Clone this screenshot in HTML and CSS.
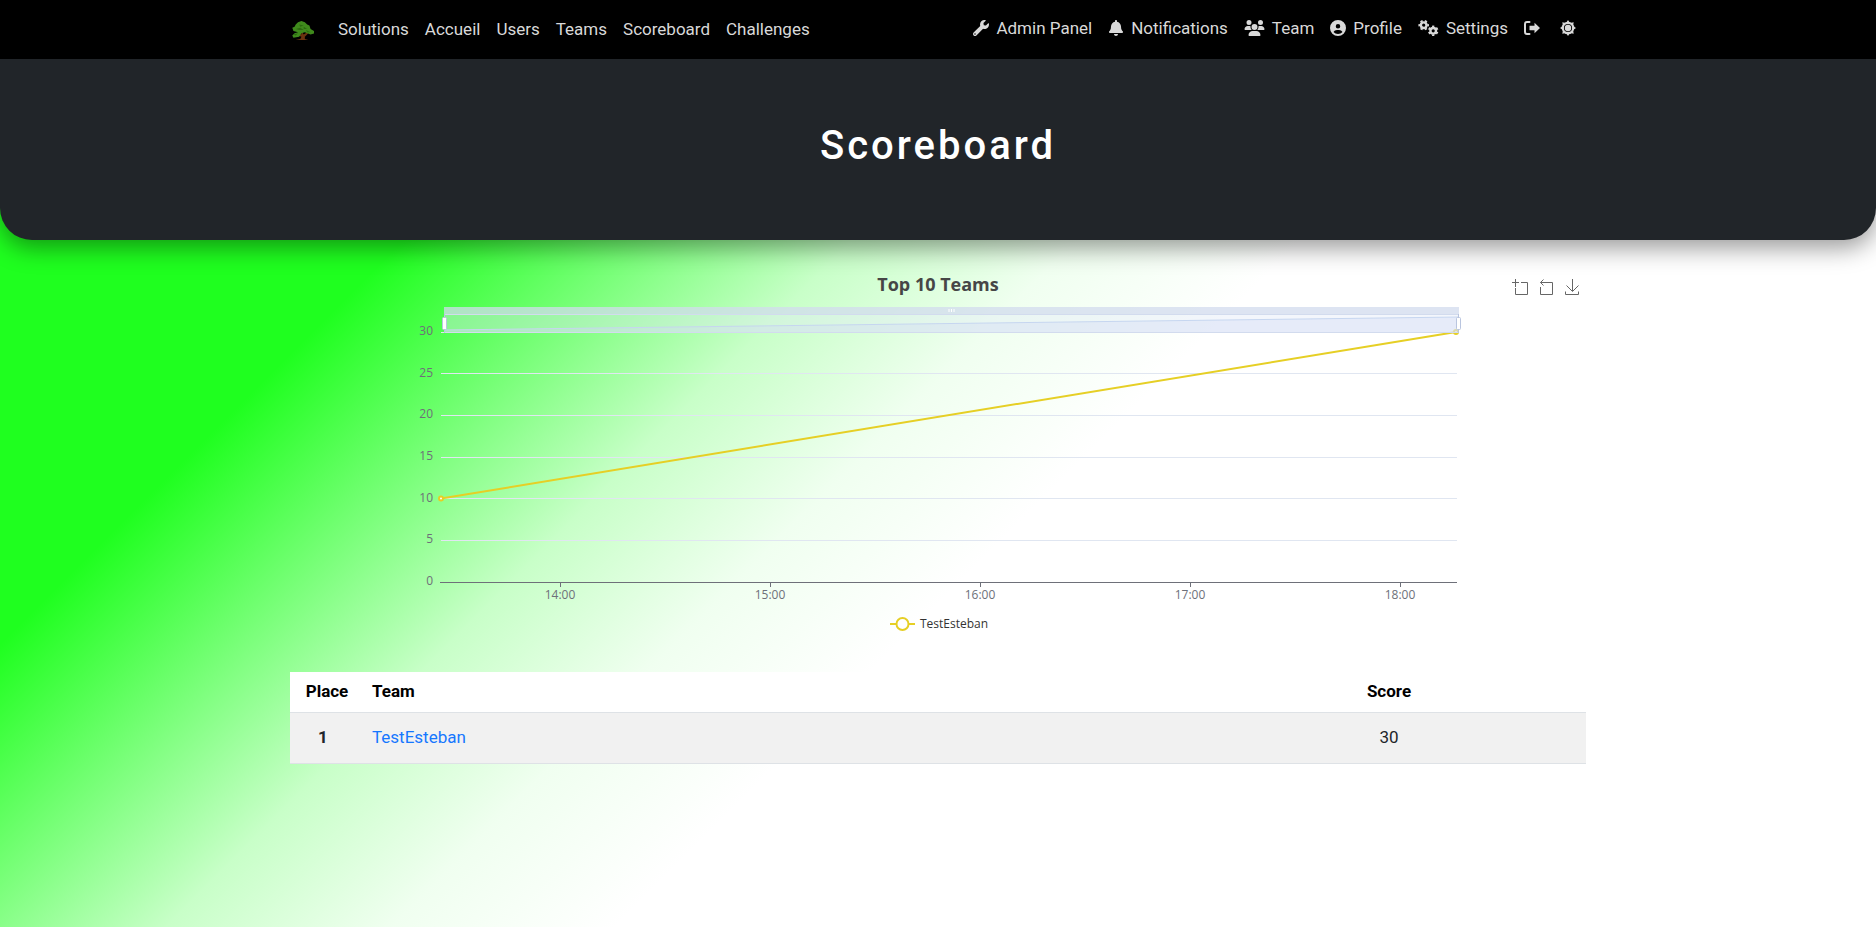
FILE: index.html
```html
<!DOCTYPE html>
<html lang="en">
<head>
<meta charset="utf-8">
<meta name="viewport" content="width=device-width, initial-scale=1">
<title>Scoreboard</title>
<link rel="stylesheet" href="styles.css">
</head>
<body>
<nav class="navbar">
  <div class="container navbar-inner">
    <a class="brand" href="#" aria-label="Home">
      <svg width="24" height="20" viewBox="1 0 21 18" preserveAspectRatio="none" aria-hidden="true">
        <path fill="#6b3410" d="M11 10l2 3 3-2 1 1-3 3 0 2 3 1H6l4-1 1-2-5-2 1-1 4 1z"/>
        <path fill="#3f8a1c" d="M8 2l3-1 3 1 2 2 2 1 1 3 3 2 1 2-4 1-5-2-3 1-2 3-5 1-1-2 2-2 3-1-4-1-1-3 2-1 1-2z"/>
        <path fill="#2c6a10" d="M9 4l4 1-3 1zM6 8l4-1 3 2-4 0zM13 6l3 2-3 0zM15 9l4 2-3 0zM4 13l4-1-2 2z"/>
      </svg>
    </a>
    <ul class="nav-list nav-main">
      <li><a class="nav-link" href="#">Solutions</a></li>
      <li><a class="nav-link" href="#">Accueil</a></li>
      <li><a class="nav-link" href="#">Users</a></li>
      <li><a class="nav-link" href="#">Teams</a></li>
      <li><a class="nav-link" href="#">Scoreboard</a></li>
      <li><a class="nav-link" href="#">Challenges</a></li>
    </ul>
    <ul class="nav-list nav-user">
      <li><a class="nav-link" href="#"><svg class="icon" viewBox="0 0 512 512" aria-hidden="true"><path d="M507.73 109.1c-2.24-9.03-13.54-12.09-20.12-5.51l-74.36 74.36-67.88-11.31-11.31-67.88 74.36-74.36c6.62-6.62 3.43-17.9-5.66-20.16-47.38-11.74-99.55.91-136.58 37.93-39.64 39.64-50.55 97.1-34.05 147.2L18.74 402.76c-24.99 24.99-24.99 65.51 0 90.5 24.99 24.99 65.51 24.99 90.5 0l213.21-213.21c50.12 16.71 107.47 5.68 147.37-34.22 37.07-37.07 49.7-89.32 37.91-136.73zM64 472c-13.25 0-24-10.75-24-24 0-13.26 10.75-24 24-24s24 10.74 24 24c0 13.25-10.75 24-24 24z"/></svg>Admin Panel</a></li>
      <li><a class="nav-link" href="#"><svg class="icon" viewBox="0 0 448 512" aria-hidden="true"><path d="M224 512c35.32 0 63.97-28.65 63.97-64H160.03c0 35.35 28.65 64 63.97 64zm215.39-149.71c-19.32-20.76-55.47-51.99-55.47-154.29 0-77.7-54.48-139.9-127.94-155.16V32c0-17.67-14.32-32-31.98-32s-31.98 14.33-31.98 32v20.84C118.56 68.1 64.08 130.3 64.08 208c0 102.3-36.15 133.53-55.47 154.29-6 6.45-8.66 14.16-8.61 21.71.11 16.4 12.98 32 32.1 32h383.8c19.12 0 32-15.6 32.1-32 .05-7.55-2.61-15.27-8.61-21.71z"/></svg>Notifications</a></li>
      <li><a class="nav-link" href="#"><svg class="icon icon-wide" viewBox="0 0 640 512" aria-hidden="true"><path d="M144 0a80 80 0 1 1 0 160A80 80 0 1 1 144 0zM512 0a80 80 0 1 1 0 160A80 80 0 1 1 512 0zM0 298.7C0 239.8 47.8 192 106.7 192h42.7c15.9 0 31 3.5 44.6 9.7c-1.3 7.2-1.9 14.7-1.9 22.3c0 38.2 16.8 72.5 43.3 96H21.3C9.6 320 0 310.4 0 298.7zM405.3 320h-.7c26.6-23.5 43.3-57.8 43.3-96c0-7.6-.7-15-1.9-22.3c13.6-6.3 28.7-9.7 44.6-9.7h42.7C592.2 192 640 239.8 640 298.7c0 11.8-9.6 21.3-21.3 21.3H405.3zM224 224a96 96 0 1 1 192 0 96 96 0 1 1 -192 0zM128 485.3C128 411.7 187.7 352 261.3 352H378.7C452.3 352 512 411.7 512 485.3c0 14.7-11.9 26.7-26.7 26.7H154.7c-14.7 0-26.7-11.9-26.7-26.7z"/></svg>Team</a></li>
      <li><a class="nav-link" href="#"><svg class="icon" viewBox="0 0 512 512" aria-hidden="true"><path fill-rule="evenodd" d="M399 384.2C376.9 345.8 335.4 320 288 320H224c-47.4 0-88.9 25.8-111 64.2c35.2 39.2 86.2 63.8 143 63.8s107.8-24.7 143-63.8zM0 256a256 256 0 1 1 512 0A256 256 0 1 1 0 256zm256 16a72 72 0 1 0 0-144 72 72 0 1 0 0 144z"/></svg>Profile</a></li>
      <li><a class="nav-link" href="#"><svg class="icon icon-wide" viewBox="0 0 20 16" aria-hidden="true">
        <g fill="none" stroke="currentColor"><circle cx="5.2" cy="5.2" r="2.8" stroke-width="2.4"/><circle cx="5.2" cy="5.2" r="4.4" stroke-width="1.8" pathLength="12" stroke-dasharray="1 1" stroke-dashoffset=".5"/><circle cx="14.7" cy="10.8" r="2.8" stroke-width="2.4"/><circle cx="14.7" cy="10.8" r="4.4" stroke-width="1.8" pathLength="12" stroke-dasharray="1 1" stroke-dashoffset="1.5"/></g></svg>Settings</a></li>
      <li><a class="nav-link" href="#" aria-label="Log out"><svg class="icon" viewBox="0 0 16 16" aria-hidden="true"><path fill="none" stroke="currentColor" stroke-width="2" stroke-linecap="round" d="M5.500 2H3a2 2 0 0 0-2 2v8a2 2 0 0 0 2 2h2.500"/><path d="M10.500 2.700L16 8l-5.500 5.300V10.200H5.500V5.800h5z"/></svg></a></li>
      <li><button class="nav-link theme-toggle" type="button" aria-label="Toggle theme"><svg class="icon" viewBox="0 0 16 16" aria-hidden="true"><circle cx="8" cy="8" r="3.200"/><circle cx="8" cy="8" r="5.200" fill="none" stroke="currentColor" stroke-width="2.200"/><path d="M8 0l2 3H6zM8 16l2-3H6zM0 8l3-2v4zM16 8l-3-2v4zM2.300 2.300l3.600.7L3 5.900zM13.700 2.300l-.7 3.600L10.100 3zM2.300 13.700L3 10.100 5.900 13zM13.700 13.700l-3.600-.7 2.900-2.900z"/></svg></button></li>
    </ul>
  </div>
</nav>

<header class="jumbotron">
  <h1>Scoreboard</h1>
</header>

<main class="container">
  <figure class="chart">
    <svg class="chart-plot" viewBox="0 0 1296 400" role="img" aria-label="Top 10 Teams">
      <text class="chart-title" x="648" y="27">Top 10 Teams</text>
      <g class="grid-lines">
        <path d="M151 68.500H1167M151 109.500H1167M151 151.500H1167M151 193.500H1167M151 234.500H1167M151 276.500H1167"/>
      </g>
      <path class="axis-line" d="M150 318.500H1167M270.500 318v5M480.500 318v5M690.500 318v5M900.500 318v5M1110.500 318v5"/>
      <g class="label label-y">
        <text x="143" y="71">30</text>
        <text x="143" y="113">25</text>
        <text x="143" y="154">20</text>
        <text x="143" y="196">15</text>
        <text x="143" y="238">10</text>
        <text x="143" y="279">5</text>
        <text x="143" y="321">0</text>
      </g>
      <g class="label label-x">
        <text x="270" y="335">14:00</text>
        <text x="480" y="335">15:00</text>
        <text x="690" y="335">16:00</text>
        <text x="900" y="335">17:00</text>
        <text x="1110" y="335">18:00</text>
      </g>
      <path class="series" d="M151 234.500L1166 68"/>
      <g class="series-points"><circle cx="151" cy="234.500" r="2"/><circle cx="1166" cy="68" r="2"/></g>
      <rect class="zoom-bar" x="154" y="43" width="1015" height="7"/>
      <rect class="zoom-range" x="154.500" y="50.500" width="1014" height="18"/>
      <path class="zoom-shadow" d="M154 66L1169 53V68H154z"/>
      <path class="zoom-shadow-line" d="M154 66L1169 53"/>
      <path class="zoom-grip" d="M659 45v3M661.500 45v3M664 45v3"/>
      <path class="zoom-handle" d="M154.500 50v19M1168.500 50v19"/>
      <rect class="zoom-handle" x="152.500" y="53.500" width="4" height="12" rx="1"/>
      <rect class="zoom-handle" x="1166.500" y="53.500" width="4" height="12" rx="1"/>
      <path class="series" d="M600 360h25"/>
      <circle class="legend-dot" cx="612.500" cy="360" r="6"/>
      <text class="legend-text" x="630" y="364">TestEsteban</text>
    </svg>
    <div class="toolbox">
      <button type="button" aria-label="Zoom"><svg width="18" height="18" viewBox="0 0 18 18"><path d="M4.500 1v8M1 4.500h7M10 4.500h6.500v12h-12V10"/></svg></button>
      <button type="button" aria-label="Restore"><svg width="18" height="18" viewBox="0 0 18 18"><path d="M6.500 1.500l-3 3 3 3M3.500 4.500h12v12H3.500V9"/></svg></button>
      <button type="button" aria-label="Save as image"><svg width="18" height="18" viewBox="0 0 18 18"><path d="M9.500 1v12M3.500 7.500l6 6 6-6M2.500 13.500v3h13v-3"/></svg></button>
    </div>
  </figure>

  <table class="standings">
    <thead>
      <tr><th class="col-place" scope="col">Place</th><th scope="col">Team</th><th class="col-score" scope="col">Score</th></tr>
    </thead>
    <tbody>
      <tr><th class="place" scope="row">1</th><td><a href="#">TestEsteban</a></td><td class="score">30</td></tr>
    </tbody>
  </table>
</main>
</body>
</html>
```
FILE: styles.css
```css
* { box-sizing: border-box; }

html { min-height: 100%; }

body {
  margin: 0;
  min-height: 100vh;
  font-family: Roboto, "Liberation Sans", sans-serif;
  font-size: 17px;
  line-height: 24px;
  color: #212529;
  background: linear-gradient(135deg, #1fff1f 23%, #c8ffc8 39%, #f0fff0 47%, #fff 55%) no-repeat;
}

.container {
  width: 100%;
  max-width: 1320px;
  margin: 0 auto;
  padding: 0 12px;
}

.navbar { background: #000; }

.navbar-inner {
  display: flex;
  align-items: center;
  min-height: 59px;
}

.brand {
  display: flex;
  margin-right: 16px;
}

.nav-list {
  display: flex;
  align-items: center;
  margin: 0;
  padding: 0;
  list-style: none;
}

.nav-main { padding-bottom: 2px; }

.nav-user {
  margin-left: auto;
  padding-bottom: 4px;
}

.nav-link {
  display: flex;
  align-items: center;
  gap: 8px;
  padding: 0 8px;
  color: #d9d9d9;
  text-decoration: none;
}

.nav-user .nav-link { gap: 7px; }

.theme-toggle {
  margin: 0 2px 0 4px;
  border: 0;
  background: none;
  font: inherit;
}

.icon {
  width: 16px;
  height: 16px;
  fill: currentColor;
}

.icon-wide { width: 21px; }

.jumbotron {
  padding: 63px 16px 64px;
  text-align: center;
  color: #fff;
  background: #212529;
  border-radius: 0 0 32px 32px;
  box-shadow: 0 8px 24px rgba(0, 0, 0, .4);
}

.jumbotron h1 {
  margin: 0;
  padding-bottom: 6px;
  font-size: 40px;
  font-weight: 500;
  line-height: 48px;
  letter-spacing: 3px;
}

.chart {
  position: relative;
  margin: 24px 0 8px;
  font-family: "Open Sans", "Noto Sans", sans-serif;
}

.chart-plot {
  display: block;
  width: 100%;
}

.chart-title {
  fill: #464646;
  font-size: 18px;
  font-weight: 700;
  text-anchor: middle;
}

.label {
  fill: #6e7079;
  font-size: 12px;
}

.label-y { text-anchor: end; }
.label-x { text-anchor: middle; }

.grid-lines { stroke: #e0e6f1; }

.axis-line {
  fill: none;
  stroke: #6e7079;
}

.series {
  fill: none;
  stroke: #e6cf25;
  stroke-width: 2;
}

.series-points {
  fill: #fff;
  stroke: #e6cf25;
  stroke-width: 2;
}

.zoom-bar { fill: rgba(210, 219, 238, .75); }

.zoom-range {
  fill: rgba(225, 232, 248, .4);
  stroke: #d2dbee;
}

.zoom-shadow { fill: rgba(210, 219, 245, .4); }

.zoom-shadow-line {
  fill: none;
  stroke: #c6d6f0;
}

.zoom-grip { stroke: #fff; }

.zoom-handle {
  fill: #fff;
  stroke: #b9c5df;
}

.legend-dot {
  fill: #fff;
  stroke: #e6cf25;
  stroke-width: 2;
}

.legend-text {
  fill: #333;
  font-size: 12px;
}

.toolbox {
  position: absolute;
  top: 14px;
  right: 5px;
  display: flex;
  gap: 8px;
}

.toolbox button {
  display: flex;
  padding: 0;
  border: 0;
  background: none;
}

.toolbox svg {
  fill: none;
  stroke: #666;
}

.standings {
  width: 100%;
  border-collapse: collapse;
  text-align: left;
}

.standings th,
.standings td {
  padding: 7px 8px 9px;
  border-bottom: 1px solid #dee2e6;
}

.standings thead { background: #fff; color: #000; }

.standings tbody { background: #f1f1f1; }

.standings tbody th,
.standings tbody td {
  padding-top: 12px;
  padding-bottom: 14px;
}

.standings .col-place {
  width: 74px;
  text-align: center;
}

.standings .place {
  padding-right: 16px;
  text-align: center;
}

.standings .col-score {
  width: 394px;
  text-align: center;
}

.standings .score { text-align: center; }

.standings a {
  color: #1677ff;
  text-decoration: none;
}
```
